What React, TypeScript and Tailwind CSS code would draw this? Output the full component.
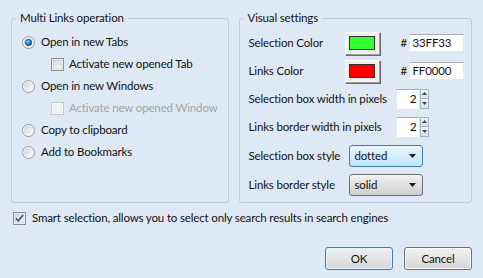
import React from 'react';

const Radio: React.FC<{ checked?: boolean }> = ({ checked }) => (
    <svg width="13" height="13" viewBox="0 0 13 13" className="shrink-0">
        <defs>
            <linearGradient id="radioFace" x1="0" y1="0" x2="1" y2="1">
                <stop offset="0" stopColor="#cfd3d8" />
                <stop offset="1" stopColor="#fbfbfb" />
            </linearGradient>
            <radialGradient id="radioDot" cx="0.4" cy="0.35" r="0.7">
                <stop offset="0" stopColor="#8fd0ff" />
                <stop offset="0.5" stopColor="#2a84d6" />
                <stop offset="1" stopColor="#0d3f74" />
            </radialGradient>
        </defs>
        <circle cx="6.5" cy="6.5" r="6" fill="#f5f5f5" stroke="#939ba3" />
        <circle cx="6.5" cy="6.5" r="4.5" fill="url(#radioFace)" />
        {checked && <circle cx="6.5" cy="6.5" r="3.2" fill="url(#radioDot)" stroke="#193f66" strokeWidth="0.6" />}
    </svg>
);

const Check: React.FC<{ checked?: boolean; disabled?: boolean }> = ({ checked, disabled }) => (
    <svg width="13" height="13" viewBox="0 0 13 13" className="shrink-0">
        <defs>
            <linearGradient id="checkFace" x1="0" y1="0" x2="1" y2="1">
                <stop offset="0" stopColor="#d3d6da" />
                <stop offset="1" stopColor="#f7f7f7" />
            </linearGradient>
        </defs>
        <rect x="0.5" y="0.5" width="12" height="12" fill="#ffffff" stroke={disabled ? '#c3c7cb' : '#8e8f8f'} />
        <rect x="2" y="2" width="9" height="9" fill={disabled ? '#f0f2f4' : 'url(#checkFace)'} stroke={disabled ? '#e0e3e6' : '#b9bdc2'} strokeWidth="0.6" />
        {checked && <path d="M3 6.2 L5.4 9 L10 3" fill="none" stroke="#3a4f8f" strokeWidth="1.6" />}
    </svg>
);

const ColorButton: React.FC<{ color: string }> = ({ color }) => (
    <div className="w-[35px] h-[23px] bg-[#f0f0f0] border border-t-white border-l-white border-r-[#a0a0a0] border-b-[#a0a0a0] shadow-[1px_1px_0_#696969] flex items-center justify-center">
        <div className="w-[26px] h-[14px] border border-[#333333]" style={{ backgroundColor: color }} />
    </div>
);

const Spinner: React.FC<{ value: string }> = ({ value }) => (
    <div className="flex h-[21px]">
        <div className="w-[24px] h-full bg-white border border-[#e3e9ef] border-t-[#abadb3] flex items-center justify-end pr-[2px] text-[12px]">{value}</div>
        <div className="flex flex-col w-[9px] h-[20px]">
            <div className="h-[10px] bg-gradient-to-b from-[#f4f6f8] to-[#d9e0e8] border border-[#a5b4c4] flex items-center justify-center">
                <svg width="5" height="3" viewBox="0 0 5 3"><path d="M0 3 L2.5 0 L5 3 Z" fill="#2c4068" /></svg>
            </div>
            <div className="h-[10px] bg-gradient-to-b from-[#f4f6f8] to-[#d9e0e8] border border-t-0 border-[#a5b4c4] flex items-center justify-center">
                <svg width="5" height="3" viewBox="0 0 5 3"><path d="M0 0 L5 0 L2.5 3 Z" fill="#2c4068" /></svg>
            </div>
        </div>
    </div>
);

const Select: React.FC<{ value: string; hot?: boolean }> = ({ value, hot }) => (
    <div
        className={
            hot
                ? 'w-[74px] h-[22px] rounded-[3px] border border-[#3c7fb1] bg-gradient-to-b from-[#eaf6fd] to-[#bee6fd] flex items-center pl-[5px] pr-[6px]'
                : 'w-[74px] h-[22px] rounded-[3px] border border-[#707070] bg-gradient-to-b from-[#f2f2f2] to-[#cfcfcf] flex items-center pl-[5px] pr-[6px]'
        }
    >
        <span className="flex-1">{value}</span>
        <svg width="7" height="4" viewBox="0 0 7 4"><path d="M0 0 L7 0 L3.5 4 Z" fill="#1a1a1a" /></svg>
    </div>
);

const App: React.FC = () => {
    return (
        <div className="w-[483px] h-[278px] bg-[#dfe9f5] pt-[10px] px-[11px] text-[11.5px] tracking-[-0.15px] whitespace-nowrap text-[#111111] font-['Lato',sans-serif]">
            <div className="flex gap-[10px]">
                {/* left group */}
                <fieldset className="w-[218px] min-w-0 h-[193px] border border-[#c2ccd6] rounded-[3px] p-0 m-0">
                    <legend className="ml-[4px] px-[4px] leading-[16px]">Multi Links operation</legend>
                    <div className="pl-[10px] pt-[5px] flex flex-col">
                        <div className="h-[22px] flex items-center gap-[6px]">
                            <Radio checked />
                            <span>Open in new Tabs</span>
                        </div>
                        <div className="h-[22px] flex items-center gap-[5px] pl-[29px]">
                            <Check />
                            <span>Activate new opened Tab</span>
                        </div>
                        <div className="h-[22px] flex items-center gap-[6px]">
                            <Radio />
                            <span>Open in new Windows</span>
                        </div>
                        <div className="h-[22px] flex items-center gap-[5px] pl-[29px]">
                            <Check disabled />
                            <span className="text-[#a3a3a3]">Activate new opened Window</span>
                        </div>
                        <div className="h-[22px] flex items-center gap-[6px]">
                            <Radio />
                            <span>Copy to clipboard</span>
                        </div>
                        <div className="h-[22px] flex items-center gap-[6px]">
                            <Radio />
                            <span>Add to Bookmarks</span>
                        </div>
                    </div>
                </fieldset>

                {/* right group */}
                <fieldset className="w-[234px] min-w-0 h-[193px] border border-[#c2ccd6] rounded-[3px] p-0 m-0">
                    <legend className="ml-[4px] px-[4px] leading-[16px]">Visual settings</legend>
                    <div className="pl-[9px] pt-[3px] flex flex-col">
                        <div className="h-[28px] flex items-center">
                            <span className="w-[96px]">Selection Color</span>
                            <ColorButton color="#33ff33" />
                            <span className="ml-[21px] w-[8px]">#</span>
                            <div className="w-[55px] h-[18px] bg-white border border-[#e3e9ef] border-t-[#abadb3] pl-[3px] leading-[16px]">33FF33</div>
                        </div>
                        <div className="h-[28px] flex items-center">
                            <span className="w-[96px]">Links Color</span>
                            <ColorButton color="#ff0000" />
                            <span className="ml-[21px] w-[8px]">#</span>
                            <div className="w-[55px] h-[18px] bg-white border border-[#e3e9ef] border-t-[#abadb3] pl-[3px] leading-[16px]">FF0000</div>
                        </div>
                        <div className="h-[28px] flex items-center">
                            <span className="w-[147px]">Selection box width in pixels</span>
                            <Spinner value="2" />
                        </div>
                        <div className="h-[28px] flex items-center">
                            <span className="w-[147px]">Links border width in pixels</span>
                            <Spinner value="2" />
                        </div>
                        <div className="h-[29px] flex items-center">
                            <span className="w-[100px]">Selection box style</span>
                            <Select value="dotted" hot />
                        </div>
                        <div className="h-[29px] flex items-center">
                            <span className="w-[100px]">Links border style</span>
                            <Select value="solid" />
                        </div>
                    </div>
                </fieldset>
            </div>

            <div className="mt-[7px] h-[16px] flex items-center gap-[6px] pl-[2px]">
                <Check checked />
                <span>Smart selection, allows you to select only search results in search engines</span>
            </div>

            <div className="mt-[21px] flex justify-end gap-[11px]">
                <button className="w-[68px] h-[23px] rounded-[3px] border border-[#3c7fb1] bg-gradient-to-b from-[#f2f2f2] to-[#d5d5d5] shadow-[inset_0_0_0_1px_#dff2fd]">OK</button>
                <button className="w-[68px] h-[23px] rounded-[3px] border border-[#707070] bg-gradient-to-b from-[#f2f2f2] to-[#d5d5d5] shadow-[inset_0_0_0_1px_#fcfcfc]">Cancel</button>
            </div>
        </div>
    );
};

export default App;
